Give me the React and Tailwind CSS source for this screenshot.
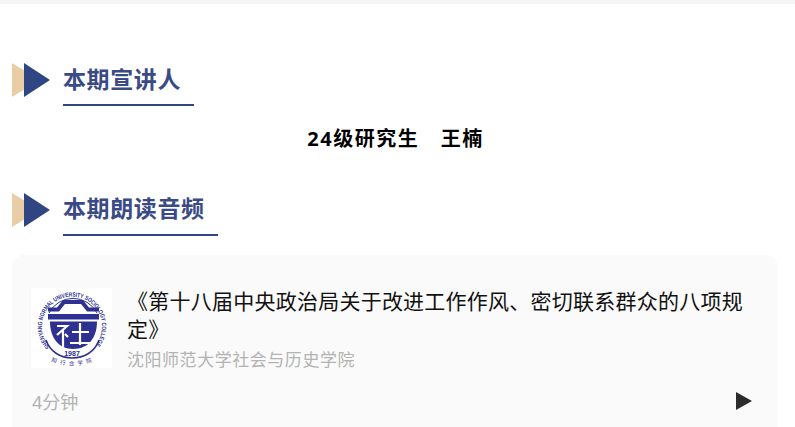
const cjk = "font-['Noto_Sans','Noto_Sans_CJK_SC',sans-serif]";

function Arrows() {
  return (
    <svg width="40" height="36" viewBox="0 0 40 36" className="shrink-0">
      <polygon points="0,1 13,9 13,27 0,35" fill="#e8cda6" />
      <polygon points="12,1 38,18 12,35" fill="#304683" />
    </svg>
  );
}

function Heading({ text, lh }) {
  return (
    <div className="flex items-start pl-3">
      <Arrows />
      <div className="ml-[11px] h-[44px] border-b-2 border-[#304683] pr-[13px]">
        <div className={`text-[23px] font-bold tracking-[0.6px] text-[#3a4a85] ${lh}`}>{text}</div>
      </div>
    </div>
  );
}

function Logo() {
  const blue = "#2e3192";
  return (
    <svg width="81" height="80" viewBox="0 0 81 80" className="shrink-0 bg-white">
      <defs>
        <path id="ringTop" d="M19 59 A30 30 0 1 1 63 59" />
        <path id="ringBottom" d="M20 73 Q41 82 63 73" />
      </defs>
      <text fontSize="6.2" fontWeight="700" fill={blue} fontFamily="Liberation Sans, sans-serif">
        <textPath href="#ringTop" textLength="136" lengthAdjust="spacingAndGlyphs">SHENYANG NORMAL UNIVERSITY SOCIOLOGY COLLEGE</textPath>
      </text>
      <path d="M18 25 A27 27 0 0 1 66 25" fill="none" stroke={blue} strokeWidth="1" />
      <path d="M17 21.5 H27 L33 14 H51 L57 21.5 H68" fill="none" stroke={blue} strokeWidth="4" />
      <rect x="17" y="26" width="51" height="5.5" fill={blue} />
      <path d="M19 33.5 H66 C66 50 57 61 42 61 C28 61 19 50 19 33.5 Z" fill={blue} />
      <path d="M26 38 H36 L26 47 M32 42 V59 M34 46 L37 49 M49 35 V57 M41 44 H58 M39 55 H61" fill="none" stroke="#fff" strokeWidth="2.2" />
      <path d="M15 52 C19 64 30 70 41 70 C53 70 64 64 68 52" fill="none" stroke={blue} strokeWidth="1.6" />
      <text x="41" y="68" textAnchor="middle" fontSize="7" fontWeight="700" fill={blue} fontFamily="Liberation Sans, sans-serif">1987</text>
      <text fontSize="5.5" fill={blue} fontFamily="Noto Sans CJK SC, sans-serif">
        <textPath href="#ringBottom" textLength="42">知行合学院</textPath>
      </text>
    </svg>
  );
}

export default function App() {
  return (
    <div className={`h-[427px] w-[795px] overflow-hidden bg-white ${cjk}`}>
      <div className="h-1 bg-[#f5f5f5]" />
      <div className="mt-[58px]">
        <Heading text="本期宣讲人" lh="leading-[35px]" />
      </div>
      <div className="mt-[18px] pr-[4px] text-center text-[20px] leading-[30px] font-bold tracking-[1.5px] text-black">
        24级研究生　王楠
      </div>
      <div className="mt-[38px]">
        <Heading text="本期朗读音频" lh="leading-[33px]" />
      </div>
      <div className="mx-3 mt-[19px] h-[200px] w-[766px] rounded-xl bg-[#fafafa] pl-[19px] pr-[25px] pt-[33px]">
        <div className="flex items-start">
          <Logo />
          <div className="ml-[15px] min-w-0 flex-1">
            <div className="-mt-[1px] text-[21px] leading-[28px] tracking-[0.24px] text-[#111111]">
              《第十八届中央政治局关于改进工作作风、密切联系群众的八项规定》
            </div>
            <div className="mt-[3px] text-[17px] leading-[28px] tracking-[0.54px] text-[#b3b3b3]">
              沈阳师范大学社会与历史学院
            </div>
          </div>
        </div>
        <div className="mt-[14px] flex items-start justify-between pl-px">
          <span className="text-[18px] leading-[28px] text-[#b3b3b3]">4分钟</span>
          <svg width="16" height="18" viewBox="0 0 16 18" className="mr-px mt-[4px]">
            <polygon points="0,0 16,9 0,18" fill="#2b2b2b" />
          </svg>
        </div>
      </div>
    </div>
  );
}
